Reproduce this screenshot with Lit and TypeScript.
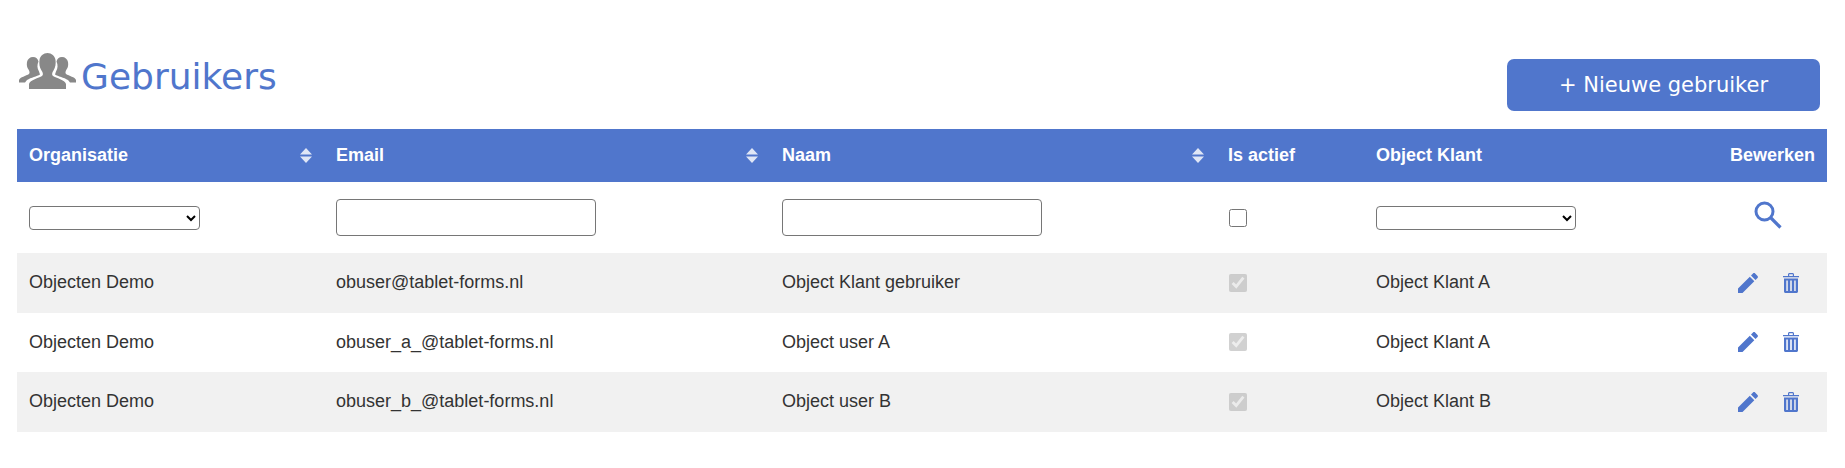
import { LitElement, html, css } from "lit";
import { customElement } from "lit/decorators.js";

const users = [
  { org: "Objecten Demo", email: "obuser@tablet-forms.nl", name: "Object Klant gebruiker", klant: "Object Klant A" },
  { org: "Objecten Demo", email: "obuser_a_@tablet-forms.nl", name: "Object user A", klant: "Object Klant A" },
  { org: "Objecten Demo", email: "obuser_b_@tablet-forms.nl", name: "Object user B", klant: "Object Klant B" },
];

const sortIcon = html`<svg class="sort" viewBox="0 0 12 15" width="12" height="15">
  <path d="M6 0 12 6.5H0z M6 15 0 8.5H12z" fill="currentColor"></path>
</svg>`;

const groupIcon = html`<svg class="group" viewBox="0 0 57 36" width="57" height="36">
  <path fill="#888" d="M0 27c1-3 7-4 10-6 1-1 .5-3-.5-4.500C8 15 7.500 12 8 9c.5-3 3-5 6-5s5 2 5.500 4.500c-1.500 3-1.500 7 .5 10l1 3c-3 2-9 3-13 5.500l-2 2.500H0z"></path>
  <path fill="#888" d="M57 27c-1-3-7-4-10-6-1-1-.5-3 .5-4.500C49 15 49.500 12 49 9c-.5-3-3-5-6-5s-5 2-5.500 4.500c1.500 3 1.500 7-.5 10l-1 3c3 2 9 3 13 5.500l2 2.500h6z"></path>
  <path fill="#888" d="M10 36v-5c1-4 10-6 13-8 1.500-1 1-3.500-.5-5.500-2-3-2.500-7-2-10.500C21 3 24.500 0 28.500 0s7.500 3 8 7c.5 3.500 0 7.500-2 10.500-1.500 2-2 4.500-.5 5.500 3 2 12 4 13 8v5z"></path>
</svg>`;

const searchIcon = html`<svg viewBox="0 0 28 28" width="28" height="28">
  <circle cx="10.500" cy="10.500" r="8.500" fill="none" stroke="currentColor" stroke-width="3"></circle>
  <path d="M17 17 26.500 26.500" stroke="currentColor" stroke-width="3.200" fill="none"></path>
</svg>`;

const editIcon = html`<svg viewBox="0 0 20 20" width="20" height="20">
  <path fill="currentColor" d="M0 20v-4.500L11.800 3.700l4.500 4.500L4.500 20z M13 2.500 15 .5c.6-.6 1.500-.6 2.100 0l2.400 2.400c.6.6.6 1.500 0 2.100l-2 2z"></path>
</svg>`;

const trashIcon = html`<svg viewBox="0 0 16 20" width="16" height="20">
  <path fill="currentColor" fill-rule="evenodd" d="M0 3h5V1.500C5 .7 5.700 0 6.500 0h3c.8 0 1.500.7 1.500 1.500V3h5v1.200H0z M6.200 3h3.600V1.200H6.200z"></path>
  <path fill="currentColor" fill-rule="evenodd" d="M1 5.500h14V18.500c0 .8-.7 1.500-1.500 1.500h-11C1.700 20 1 19.300 1 18.500z M3.300 7.500v10.500h1.500V7.500z M7.200 7.500v10.500h1.600V7.500z M11.200 7.500v10.500h1.500V7.500z"></path>
</svg>`;

@customElement("app-root")
export class AppRoot extends LitElement {
  static styles = css`
    :host {
      display: block;
      font-family: "Liberation Sans", Arial, sans-serif;
      font-size: 18px;
      color: #333;
      background: #fff;
      height: 468px;
      box-sizing: border-box;
      padding: 53px 18px 0 17px;
    }

    .top {
      display: flex;
      justify-content: space-between;
      height: 76px;
    }

    .title {
      display: flex;
      align-items: flex-start;
      gap: 5px;
      padding-left: 2px;
    }

    .group {
      display: block;
    }

    h1 {
      margin: 0;
      font-family: "DejaVu Sans", Verdana, sans-serif;
      font-size: 36px;
      font-weight: 400;
      line-height: 48px;
      color: #5076cc;
    }

    .add {
      width: 313px;
      height: 52px;
      margin: 6px 7px 0 0;
      border: 0;
      border-radius: 7px;
      background: #5076cc;
      color: #fff;
      font-family: "DejaVu Sans", Verdana, sans-serif;
      font-size: 21px;
      padding: 0;
    }

    table {
      width: 100%;
      border-collapse: collapse;
      table-layout: fixed;
    }

    th {
      height: 53px;
      padding: 0 12px;
      background: #5076cc;
      color: #fff;
      font-weight: 700;
      text-align: left;
      position: relative;
    }

    th.right,
    td.right {
      text-align: right;
    }

    .sort {
      position: absolute;
      right: 12px;
      top: 19px;
      color: #dfe6f6;
    }

    .filters td {
      height: 71px;
      background: #fff;
    }

    td {
      height: 59.5px;
      padding: 0 12px;
      box-sizing: border-box;
    }

    tbody tr.row:nth-child(even) td {
      background: #f1f1f1;
    }

    select {
      display: block;
      height: 24px;
      box-sizing: border-box;
      background: #fff;
      border: 1px solid #767676;
      border-radius: 4px;
    }

    .org {
      width: 171px;
    }

    .klant {
      width: 200px;
    }

    input[type="text"] {
      display: block;
      width: 260px;
      height: 37px;
      box-sizing: border-box;
      border: 1px solid #767676;
      border-radius: 4px;
    }

    input[type="checkbox"] {
      display: block;
      width: 18px;
      height: 18px;
      margin: 0 0 0 1px;
    }

    .actions {
      display: flex;
      justify-content: flex-end;
      align-items: flex-start;
      gap: 25px;
      color: #5076cc;
      padding-right: 16px;
    }

    .search {
      color: #5076cc;
      padding-right: 45px;
      text-align: right;
    }

    svg {
      display: block;
    }

    .search svg {
      display: inline-block;
    }
  `;

  render() {
    return html`
      <div class="top">
        <div class="title">
          ${groupIcon}
          <h1>Gebruikers</h1>
        </div>
        <button class="add">+ Nieuwe gebruiker</button>
      </div>
      <table>
        <colgroup>
          <col style="width:307px" />
          <col style="width:446px" />
          <col style="width:446px" />
          <col style="width:148px" />
          <col style="width:250px" />
          <col />
        </colgroup>
        <thead>
          <tr>
            <th>Organisatie ${sortIcon}</th>
            <th>Email ${sortIcon}</th>
            <th>Naam ${sortIcon}</th>
            <th>Is actief</th>
            <th>Object Klant</th>
            <th class="right">Bewerken</th>
          </tr>
        </thead>
        <tbody>
          <tr class="filters">
            <td><select class="org"><option></option></select></td>
            <td><input type="text" /></td>
            <td><input type="text" /></td>
            <td><input type="checkbox" /></td>
            <td><select class="klant"><option></option></select></td>
            <td class="search">${searchIcon}</td>
          </tr>
          ${users.map(
            (u) => html`<tr class="row">
              <td>${u.org}</td>
              <td>${u.email}</td>
              <td>${u.name}</td>
              <td><input type="checkbox" checked disabled /></td>
              <td>${u.klant}</td>
              <td><div class="actions">${editIcon}${trashIcon}</div></td>
            </tr>`,
          )}
        </tbody>
      </table>
    `;
  }
}
